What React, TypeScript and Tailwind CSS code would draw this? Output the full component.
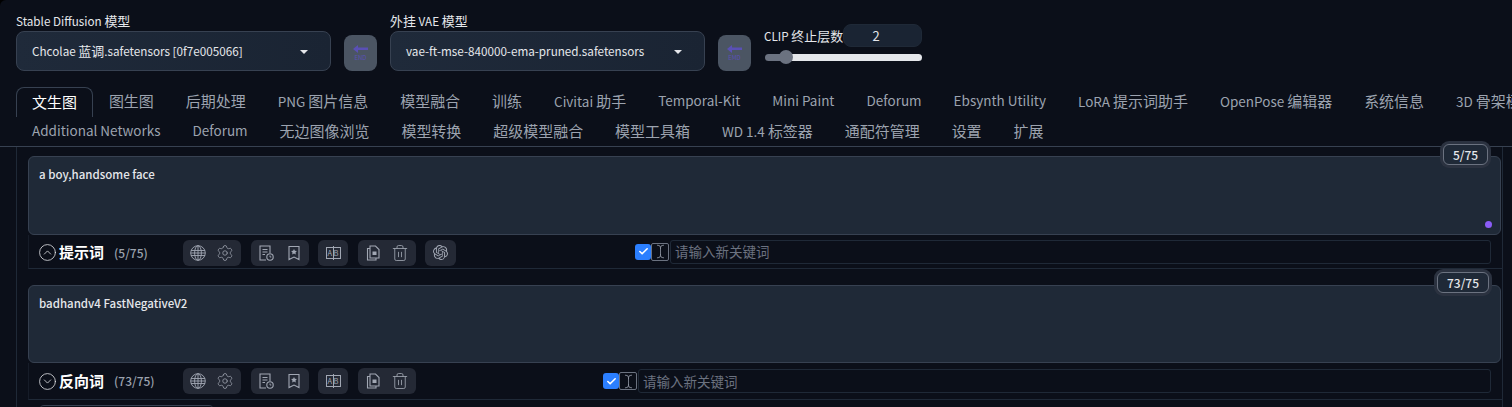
import React from "react";
import { CircleChevronDown, CircleChevronUp, Settings, Trash2, TextCursor, Check } from "lucide-react";
import { SiOpenai } from "react-icons/si";

const row1 = ["图生图", "后期处理", "PNG 图片信息", "模型融合", "训练", "Civitai 助手", "Temporal-Kit", "Mini Paint", "Deforum", "Ebsynth Utility", "LoRA 提示词助手", "OpenPose 编辑器", "系统信息", "3D 骨架模型编辑"];
const row2 = ["Additional Networks", "Deforum", "无边图像浏览", "模型转换", "超级模型融合", "模型工具箱", "WD 1.4 标签器", "通配符管理", "设置", "扩展"];

// chinese runs are a bit bigger than the latin ones in the original
function Mixed({ text }: { text: string }) {
  return (
    <>
      {text.split(/([\u4e00-\u9fff]+)/).map((part, i) =>
        i % 2 === 1 ? (
          <span key={i} className="text-[1.11em]">{part}</span>
        ) : (
          <span key={i}>{part}</span>
        )
      )}
    </>
  );
}

function ModelSelect({ label, value }: { label: string; value: string }) {
  return (
    <div className="w-[315px]">
      <div className="h-[31px] whitespace-nowrap pt-[11px] text-[11.7px] leading-[19px] text-[#e5e7eb]"><Mixed text={label} /></div>
      <div className="flex h-10 items-center justify-between rounded-lg border border-[#374151] bg-gradient-to-r from-[#1f2a3a] to-[#1a2433] pl-[15px] pr-[22px] text-[11.7px] text-[#e5e7eb]">
        <span className="whitespace-nowrap"><Mixed text={value} /></span>
        <span className="mt-0.5 h-0 w-0 border-x-[4px] border-t-[4px] border-x-transparent border-t-[#e5e7eb]" />
      </div>
    </div>
  );
}

function RefreshButton({ tag }: { tag: string }) {
  return (
    <button className="mx-[13px] mt-[35px] flex h-9 w-[33px] flex-col items-center justify-center rounded-lg bg-[#4b5563]">
      <svg width="15" height="8" viewBox="0 0 15 8" fill="#5a50b5">
        <path d="M5 0 L5 2.500 L15 2.500 L15 5 L5 5 L5 8 L0 4 Z" />
      </svg>
      <span className="mt-[1px] text-[6px] leading-[7px] text-[#5a50b5]">{tag}</span>
    </button>
  );
}

function GlobeIcon() {
  return (
    <svg width="16" height="16" viewBox="0 0 16 16" fill="none" stroke="#a1a7b3" strokeWidth="0.9">
      <circle cx="8" cy="8" r="7.300" />
      <ellipse cx="8" cy="8" rx="3.400" ry="7.300" />
      <path d="M8 .7v14.600M1 5.500h14M.7 8h14.600M1 10.500h14" />
    </svg>
  );
}

function FileClockIcon() {
  return (
    <svg width="16" height="16" viewBox="0 0 16 16" fill="none" stroke="#a1a7b3" strokeWidth="1.100">
      <path d="M8 15H2V1h10v7" />
      <path d="M4.500 4.500h5M4.500 7h5M4.500 9.500h2.500" />
      <circle cx="12" cy="12" r="3.200" />
      <path d="M12 10.500V12h1.300" strokeWidth="0.900" />
    </svg>
  );
}

function StarBookmark() {
  return (
    <svg width="16" height="16" viewBox="0 0 16 16" fill="none" stroke="#a1a7b3" strokeWidth="1.100">
      <path d="M3 1.500h10v13l-5-2.500-5 2.500z" />
      <path d="M8 4l.9 1.800 2 .3-1.400 1.400.3 2L8 8.600l-1.800.9.3-2-1.400-1.400 2-.3z" fill="#a1a7b3" stroke="none" />
    </svg>
  );
}

function CopyIcon() {
  return (
    <svg width="16" height="16" viewBox="0 0 16 16" fill="none" stroke="#a1a7b3" strokeWidth="1.100">
      <path d="M5 1h5.500L14 4.500V13H5z" />
      <path d="M5 3.500H2.500V15H11v-2" />
      <rect x="7.500" y="6.500" width="4" height="3.500" fill="#a1a7b3" stroke="none" />
    </svg>
  );
}

function ToolGroup({ children, wide = true, className = "" }: { children: React.ReactNode; wide?: boolean; className?: string }) {
  return (
    <div className={`flex h-[26px] items-center rounded-md bg-[#242935] ${wide ? "w-[58px] justify-between px-[7px]" : "w-[30px] justify-around"} ${className}`}>
      {children}
    </div>
  );
}

function PromptToolbar({ title, count, up, rowClass, inputClass, withAi }: { title: string; count: string; up: boolean; rowClass: string; inputClass: string; withAi: boolean }) {
  const Chevron = up ? CircleChevronUp : CircleChevronDown;
  return (
    <div className={`ml-[11px] flex items-center border-b border-l border-b-[#1f2937] border-l-[#161c28] ${rowClass}`}>
      <div className="flex w-[154px] shrink-0 items-center pl-[9px]">
        <Chevron size={19} strokeWidth={1} color="#e5e7eb" className="shrink-0" />
        <span className="ml-[2px] text-[15px] font-bold text-white">{title}</span>
        <span className="ml-[10px] text-xs font-medium text-[#9ca3af]">({count})</span>
      </div>
      <div className="flex items-center gap-[10px]">
        <ToolGroup>
          <GlobeIcon />
          <Settings size={18} strokeWidth={1} color="#a1a7b3" />
        </ToolGroup>
        <ToolGroup>
          <FileClockIcon />
          <StarBookmark />
        </ToolGroup>
        <ToolGroup wide={false} className="-ml-px">
          <div className="relative flex h-[12px] w-[15px] items-center justify-between border border-[#a1a7b3] px-[1px] text-[7.5px] leading-none text-[#a1a7b3]">
            <span>A</span>
            <span>B</span>
            <span className="absolute -bottom-[2px] -top-[2px] left-[6px] w-px bg-[#a1a7b3]" />
          </div>
        </ToolGroup>
        <ToolGroup>
          <CopyIcon />
          <Trash2 size={18} strokeWidth={1.1} color="#a1a7b3" />
        </ToolGroup>
        {withAi && (
          <ToolGroup wide={false} className="-ml-px !w-[31px]">
            <SiOpenai size={15} color="#a1a7b3" />
          </ToolGroup>
        )}
      </div>
      <div className={`flex min-w-0 flex-1 items-center ${inputClass}`}>
        <span className="flex h-4 w-4 shrink-0 items-center justify-center rounded-[3px] bg-[#2b7fff]">
          <Check size={11} strokeWidth={3.5} color="white" />
        </span>
        <span className="flex h-[18px] w-[18px] shrink-0 items-center justify-center rounded-[2px] border border-[#6b7280]">
          <TextCursor size={15} strokeWidth={1.2} color="#9ca3af" />
        </span>
        <div className="ml-[1px] flex h-6 flex-1 items-center rounded-[3px] border border-[#1f2937] pl-[4px] text-[13.5px] text-[#6b7280]">
          请输入新关键词
        </div>
      </div>
    </div>
  );
}

function PromptBox({ text, count, height, badgeClass }: { text: string; count: string; height: string; badgeClass: string }) {
  return (
    <div className="relative ml-[11px] mr-px">
      <div className={`rounded-md border border-[#374151] bg-[#1f2937] px-[10px] py-[9px] text-[11.5px] leading-4 font-medium text-[#e5e7eb] ${height}`}>
        {text}
      </div>
      <div className={`absolute flex h-[21px] items-center justify-center rounded-md border border-[#6b7280] bg-[#1f2937] text-xs font-medium text-[#e5e7eb] shadow-[0_0_0_3px_#2b3240] ${badgeClass}`}>
        {count}
      </div>
    </div>
  );
}

export default function App() {
  return (
    <div className="h-[407px] w-[1512px] overflow-hidden bg-black font-['Noto_Sans_CJK_SC',sans-serif]">
      <div className="h-full rounded-tl-md bg-[#0b0f19]">
        {/* model selectors */}
        <div className="flex h-[71px] pl-4">
          <ModelSelect label="Stable Diffusion 模型" value="Chcolae 蓝调.safetensors [0f7e005066]" />
          <RefreshButton tag="END" />
          <ModelSelect label="外挂 VAE 模型" value="vae-ft-mse-840000-ema-pruned.safetensors" />
          <RefreshButton tag="EMD" />
          <div className="w-[158px] pl-[1px]">
            <div className="mt-6 flex h-[23px] items-center justify-between">
              <span className="-ml-[1px] whitespace-nowrap text-[11.7px] text-[#e5e7eb]"><Mixed text="CLIP 终止层数" /></span>
              <span className="flex h-[23px] w-[79px] shrink-0 items-center justify-center rounded-lg border border-[#1f2937] bg-[#1a2433] pr-[13px] text-[13px] text-[#e5e7eb]">2</span>
            </div>
            <div className="mt-[3px] flex h-[14px] w-[157px] items-center">
              <div className="h-[7px] w-[20px] rounded-l-full bg-[#6b7280]" />
              <div className="z-10 -mx-[6px] h-[14px] w-[14px] rounded-full bg-[#6b7280]" />
              <div className="h-[7px] flex-1 rounded-r-full bg-[#e5e7eb]" />
            </div>
          </div>
        </div>

        {/* tabs */}
        <div className="mt-4 flex h-[30px] overflow-hidden whitespace-nowrap pl-4 text-[13.5px] text-[#9ca3af]">
          <div className="rounded-t-lg border border-b-0 border-[#374151] bg-[#0b0f19] px-[15px] leading-[27px] text-white"><Mixed text="文生图" /></div>
          {row1.map((tab) => (
            <div key={tab} className="shrink-0 px-4 leading-[27px]"><Mixed text={tab} /></div>
          ))}
        </div>
        <div className="flex h-[30px] overflow-hidden whitespace-nowrap border-b border-[#374151] pl-4 text-[13.5px] text-[#9ca3af]">
          {row2.map((tab) => (
            <div key={tab} className="shrink-0 px-4 leading-[27px]"><Mixed text={tab} /></div>
          ))}
        </div>

        {/* prompts */}
        <div className="ml-4 mr-[9px] h-full border-x border-[#1f2937] pt-[9px]">
          <div className="relative">
            <PromptBox text="a boy,handsome face" count="5/75" height="h-[79px]" badgeClass="right-[13px] -top-[12px] w-[45px]" />
            <span className="absolute bottom-[7px] right-[10px] h-[7px] w-[7px] rounded-full bg-[#8b5cf6]" />
          </div>
          <PromptToolbar title="提示词" count="5/75" up rowClass="h-[34px] pt-[2px]" inputClass="-mt-[2px] ml-[179px] mr-[11px]" withAi />
          <div className="mt-[16px]">
            <PromptBox text="badhandv4 FastNegativeV2" count="73/75" height="h-[78px]" badgeClass="right-[12px] -top-[13px] w-[52px]" />
          </div>
          <PromptToolbar title="反向词" count="73/75" up={false} rowClass="h-[37px]" inputClass="ml-[187px] mr-[11px]" withAi={false} />
          <div className="ml-[23px] mt-[5px] h-1 w-[173px] rounded-t-md border-t border-[#374151]" />
        </div>
      </div>
    </div>
  );
}
